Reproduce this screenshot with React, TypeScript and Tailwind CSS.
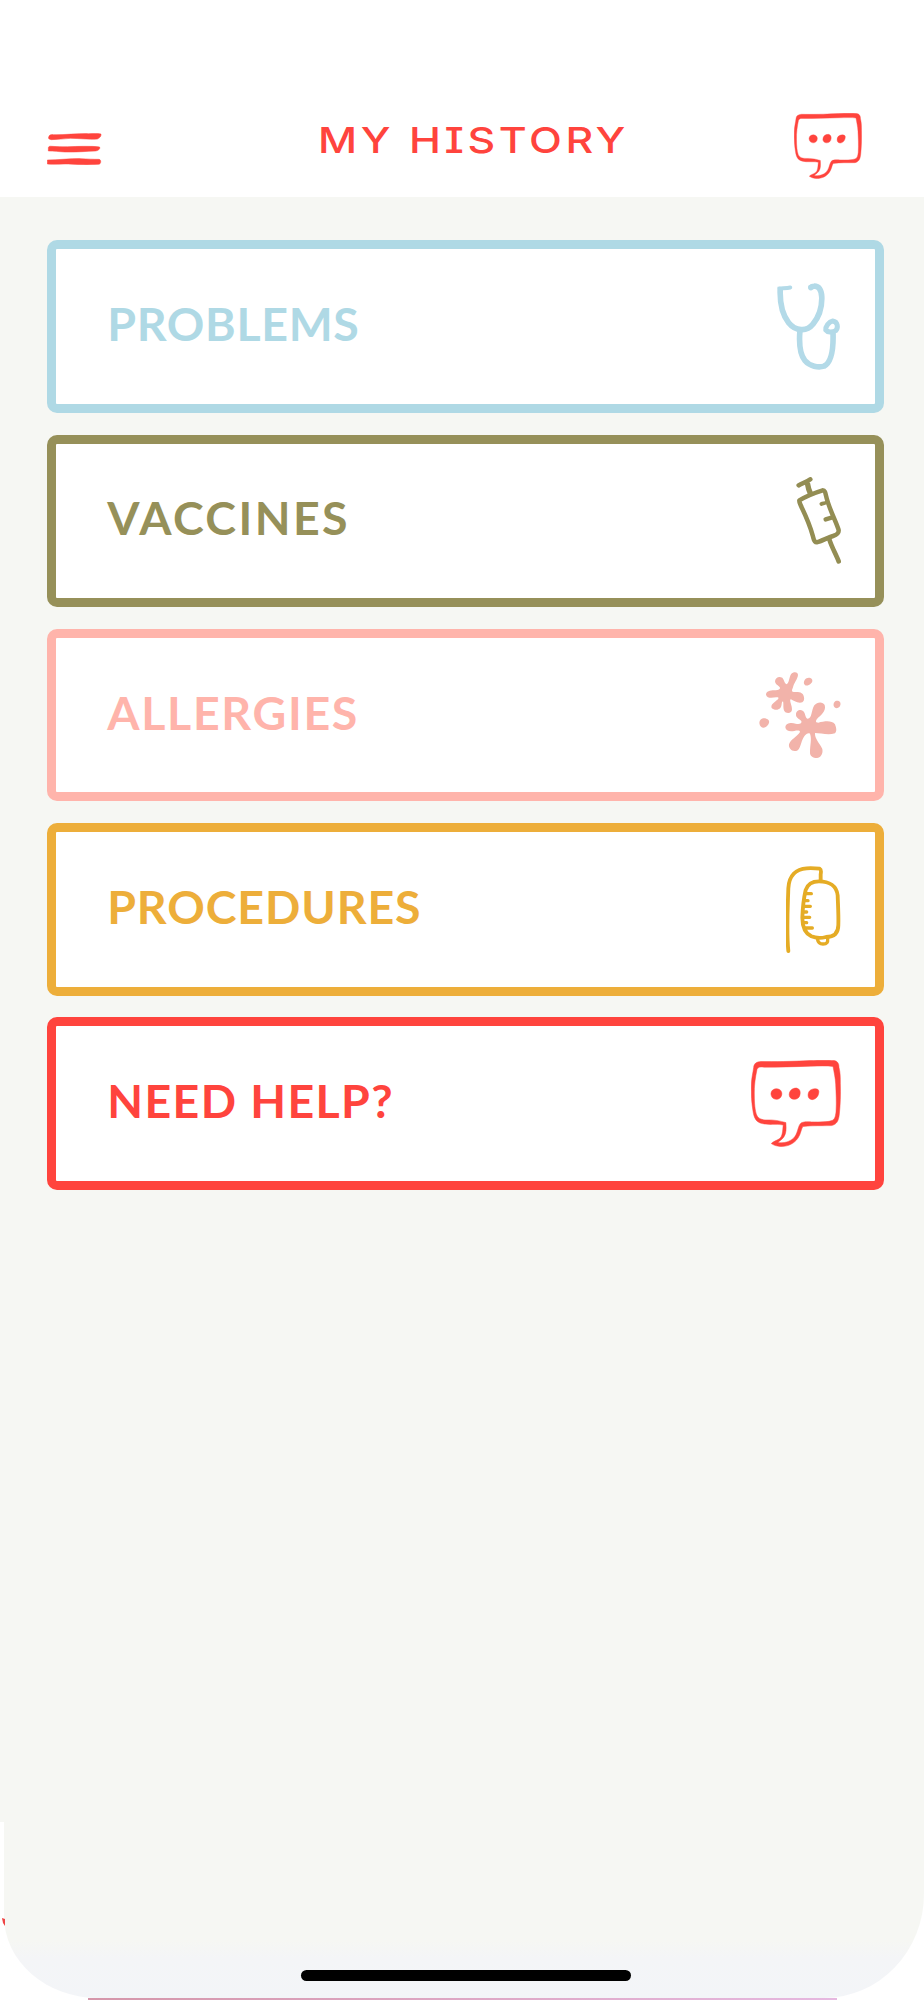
import type { ReactNode } from "react";

const BubbleIcon = ({ className }: { className?: string }) => (
  <svg
    viewBox="62 60 271 261"
    className={className}
    fill="currentColor"
    stroke="currentColor"
    strokeWidth={1.5}
  >
    <path
      fillRule="evenodd"
      d="M70 82 C71 70 78 65 92 64 C130 65 185 64 240 61 C270 60 295 60 312 61 C323 63 327 70 327 82 C331 98 331 112 331 130 C332 165 331 195 328 222 C326 243 320 254 304 257 C275 258 248 256 218 260 C213 268 212 282 204 294 C192 312 172 321 150 320 C139 319 130 316 123 311 C127 306 139 302 147 297 C158 289 157 272 159 255 C138 251 114 256 96 251 C77 247 71 234 68 213 C64 190 62 163 63 132 C64 112 68 98 70 82 Z M80 88 C75 112 71 138 72 165 C72 190 74 212 79 225 C84 237 96 240 110 240 C130 239 150 243 167 248 C168 265 169 280 161 291 C156 299 147 303 143 308 C159 311 178 306 190 295 C203 281 202 264 210 252 C215 245 230 245 245 246 C270 246 292 247 305 242 C314 239 316 231 318 216 C320 184 318 158 317 132 C316 112 312 97 309 79 C290 76 265 78 242 78 C190 80 145 81 101 81 C90 80 83 80 80 88 Z"
    />
    <path d="M122 162 C122 151 130 146 140 146 C150 147 155 153 155 162 C154 172 147 178 138 178 C128 177 123 171 122 162 Z" />
    <path d="M177 164 C178 151 186 144 199 144 C208 146 211 153 210 161 C209 172 202 178 191 178 C183 177 177 172 177 164 Z" />
    <path d="M234 168 C233 154 241 147 254 146 C264 146 268 150 266 159 C264 171 256 178 246 179 C239 178 235 175 234 168 Z" />
  </svg>
);

const MenuIcon = () => (
  <svg
    viewBox="51 98 164 96"
    className="h-8 w-[54.7px]"
    fill="currentColor"
    stroke="currentColor"
    strokeWidth={1.5}
  >
    <path d="M56 110 C58 104 62 102 70 103 C105 104 140 99 175 100 C190 100 203 99 213 101 C214 108 209 113 202 116 C175 118 148 114 122 114 C102 115 82 118 64 118 C57 117 54 115 56 110 Z" />
    <path d="M55 142 C56 138 60 137 66 138 C95 141 130 138 160 138 C180 138 197 138 209 140 C211 146 205 151 197 152 C168 153 135 156 105 155 C87 154 70 152 55 152 Z" />
    <path d="M52 179 C85 179 120 174 153 175 C173 176 190 177 207 177 C214 178 214 191 206 192 C175 194 145 193 115 191 C94 190 73 193 52 191 Z" />
  </svg>
);

const StethoscopeIcon = () => (
  <svg
    viewBox="79 69 193 261"
    className="h-[87px] w-[64px]"
    fill="none"
    stroke="#b3dae8"
    strokeWidth={17}
    strokeLinecap="round"
    strokeLinejoin="round"
  >
    <path strokeWidth={12} d="M119 82 C110 84 99 84 87 85" />
    <path strokeLinecap="butt" d="M89 80 C86 132 96 165 114 188 C135 214 169 216 187 193 C207 169 215 138 214 110 C213 89 205 77 190 78 C185 78 182 80 180 83" />
    <path d="M181 82 V82.1" />
    <path d="M148 214 C145 253 148 284 163 302 C178 320 204 324 221 319 C247 306 249 258 248 221" />
    <path strokeWidth={15} d="M247 183 C235 185 225 200 226 210 C231 217 245 218 256 212 C264 204 263 185 247 183 Z" />
  </svg>
);

const SyringeIcon = () => (
  <svg
    viewBox="137 53 135 261"
    className="h-[87px] w-[45px]"
    fill="none"
    stroke="#938d53"
    strokeWidth={13.5}
    strokeLinecap="round"
    strokeLinejoin="round"
  >
    <path d="M145 78 C155 71 169 69 180 60" />
    <path strokeWidth={16} strokeLinecap="butt" d="M171 71 C173 84 176 94 181 104" />
    <path d="M147 123 C169 110 191 101 217 93 C224 93 225 99 227 109 C235 145 252 175 264 209 C268 221 260 226 248 230 C231 235 215 245 199 249 C190 249 190 238 187 228 C178 196 166 169 153 142 C150 134 146 129 147 123 Z" />
    <path strokeWidth={11} d="M213 134 C219 131 225 134 231 127" />
    <path d="M226 180 L246 174" />
    <path strokeWidth={14} d="M237 240 C244 263 257 285 265 306" />
  </svg>
);

const AllergyIcon = () => (
  <svg viewBox="57 66 246 261" className="h-[87px] w-[82px]" fill="#f2b3aa">
    <path d="M105 94 C106 83 116 78 127 83 C133 89 132 98 139 103 C148 101 147 82 153 73 C160 65 172 65 174 74 C174 86 161 100 159 112 C157 118 154 122 158 125 C167 127 181 123 188 132 C194 141 194 153 187 157 C174 162 160 151 153 148 C146 149 156 165 156 178 C156 189 145 192 136 187 C127 179 132 162 129 154 C123 157 127 166 121 174 C114 182 101 180 95 174 C91 164 103 158 110 151 C117 145 118 141 109 142 C96 143 81 146 78 134 C78 123 94 120 107 121 C119 121 123 115 118 110 C111 105 105 101 105 94 Z" />
    <path d="M168 195 C167 183 179 177 188 182 C197 187 194 200 202 206 C217 207 213 181 223 166 C231 155 249 154 254 165 C260 184 241 196 231 207 C226 214 227 218 235 218 C253 214 275 210 285 223 C288 232 292 243 285 250 C264 256 241 249 225 249 C224 267 239 279 247 297 C250 313 241 323 231 324 C219 324 209 318 210 306 C210 284 216 268 210 251 C202 246 192 258 187 270 C182 282 180 298 171 302 C156 307 145 295 147 283 C151 269 171 260 180 246 C180 241 172 241 163 243 C149 246 137 243 136 232 C137 218 155 217 167 221 C177 224 187 221 184 213 C178 207 168 203 168 195 Z" />
    <path d="M192 101 C190 90 200 80 211 84 C220 88 218 97 212 101 C206 107 196 110 192 101 Z" />
    <path d="M281 167 C279 157 287 150 296 153 C303 156 303 165 298 171 C292 177 283 175 281 167 Z" />
    <path d="M58 219 C58 207 69 202 79 206 C90 208 89 219 83 226 C76 236 60 237 58 219 Z" />
  </svg>
);

const DripIcon = () => (
  <svg
    viewBox="108 63 165 261"
    className="h-[87px] w-[55px]"
    fill="none"
    stroke="#e5ac25"
    strokeWidth={11.5}
    strokeLinecap="round"
    strokeLinejoin="round"
  >
    <path d="M115 318 C109 258 113 195 115 130 C117 91 139 72 170 70 C184 69 198 70 209 71 C215 74 213 80 212 88 L212 105" />
    <path d="M207 109 C238 109 260 123 263 151 C264 182 266 211 265 240 C265 267 250 276 228 276 C213 280 196 279 184 274 C162 263 157 243 157 218 C158 190 161 161 167 135 C173 117 187 109 207 109 Z" />
    <path strokeWidth={10} d="M166 146 H184 M164 167 H174 M162 184 H181 M161 201 H170 M161 217 H179 M162 233 H170 M165 249 H187" />
    <path strokeWidth={10} d="M202 281 C204 293 209 297 219 297 C231 297 234 292 233 281" />
  </svg>
);

type HistoryItem = {
  title: string;
  card: string;
  tracking: string;
  icon: ReactNode;
};

const items: HistoryItem[] = [
  {
    title: "PROBLEMS",
    card: "border-[#afd9e5] text-[#afd9e5]",
    tracking: "tracking-[0.7px]",
    icon: <StethoscopeIcon />,
  },
  {
    title: "VACCINES",
    card: "border-[#969059] text-[#969059]",
    tracking: "tracking-[2.4px]",
    icon: <SyringeIcon />,
  },
  {
    title: "ALLERGIES",
    card: "border-[#ffb4ab] text-[#ffb4ab]",
    tracking: "tracking-[1.7px]",
    icon: <AllergyIcon />,
  },
  {
    title: "PROCEDURES",
    card: "border-[#edae3a] text-[#edae3a]",
    tracking: "tracking-[0.9px]",
    icon: <DripIcon />,
  },
  {
    title: "NEED HELP?",
    card: "border-[#ff443d] text-[#ff443d]",
    tracking: "tracking-[1.4px]",
    icon: <BubbleIcon className="h-[87px] w-[90px]" />,
  },
];

const App = () => {
  return (
    <div className="flex h-[2000px] w-[924px] flex-col overflow-hidden bg-[#f6f7f3]">
      {/* Header */}
      <header className="flex h-[197px] shrink-0 items-start bg-white pl-[47px] pr-[62px] text-[#ff443d]">
        <button className="mt-[132.5px]" aria-label="Menu">
          <MenuIcon />
        </button>
        <h1 className="ml-[216px] mt-[117.5px] w-[306px] origin-left scale-x-[1.19] whitespace-nowrap font-['Inter',sans-serif] text-[36px] font-[450] leading-[44px] tracking-[3px] [font-feature-settings:'cv08']">
          MY HISTORY
        </h1>
        <button className="ml-auto mt-[112.5px]" aria-label="Chat">
          <BubbleIcon className="h-[66px] w-[68px]" />
        </button>
      </header>

      {/* History sections */}
      <main className="flex flex-1 flex-col gap-[21.75px] pl-[47.2px] pr-[39.6px] pt-[43.4px]">
        {items.map((item) => (
          <button
            key={item.title}
            className={`flex h-[172.5px] items-center justify-between rounded-[10px] border-[9px] bg-white pl-[51px] pr-[34.5px] ${item.card}`}
          >
            <span
              className={`-mt-[7px] whitespace-nowrap font-['Lato',sans-serif] text-[46.5px] font-bold leading-[56px] ${item.tracking}`}
            >
              {item.title}
            </span>
            {item.icon}
          </button>
        ))}
      </main>

      {/* Bottom edge of the screen */}
      <footer className="relative h-[178px] shrink-0 bg-white pl-1">
        <div className="absolute bottom-0 left-[88px] h-[2px] w-[749px] bg-linear-to-r from-[#d596aa] to-[#e6b8e0]" />
        <div className="relative flex h-[176px] items-end justify-center rounded-bl-[94px_82px] rounded-br-[100px_104px] bg-[linear-gradient(#f6f7f3_0,#f6f7f3_118px,#f4f5f7_136px,#f3f5f8_100%)] pb-[17px] pl-[4px]">
          <div className="h-[11px] w-[330px] rounded-full bg-black" />
        </div>
        <svg viewBox="0 0 3 8" className="absolute left-[2px] top-[96px] h-2 w-[3px]">
          <path d="M0 0 L3 1 V8 L1 5 Z" fill="#ee4545" />
        </svg>
      </footer>
    </div>
  );
};

export default App;
